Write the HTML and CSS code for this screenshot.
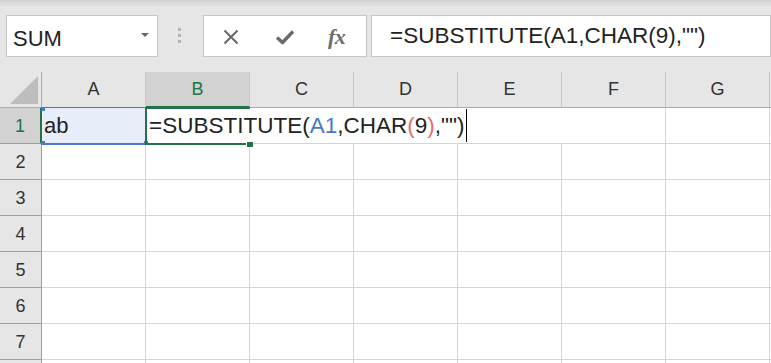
FILE: index.html
```html
<!DOCTYPE html>
<html lang="ja">
<head>
<meta charset="utf-8">
<title>Excel SUBSTITUTE</title>
<link rel="stylesheet" href="styles.css">
</head>
<body>
<div class="toolbar">
  <div class="namebox"><span class="name">SUM</span><span class="caret"></span></div>
  <div class="grip"><i></i><i></i><i></i></div>
  <div class="buttons">
    <svg class="ic-x" width="16" height="16" viewBox="0 0 16 16"><path d="M1.5 1.5 L14.5 14.5 M14.5 1.5 L1.5 14.5" stroke="#666" stroke-width="2" fill="none"/></svg>
    <svg class="ic-check" width="20" height="16" viewBox="0 0 20 16"><path d="M2 8.5 L7.5 13.5 L18 2.5" stroke="#6a6a6a" stroke-width="3.4" fill="none" stroke-linejoin="round"/></svg>
    <span class="fx">fx</span>
  </div>
  <div class="formula">=SUBSTITUTE(A1,CHAR(9),"")</div>
</div>
<div class="sheet">
  <div class="corner"><svg width="41" height="35" viewBox="0 0 41 35"><polygon points="10,32 38,32 38,4" fill="#bdbdbd"/></svg></div>
  <div class="ch">A</div><div class="ch sel">B</div><div class="ch">C</div><div class="ch">D</div><div class="ch">E</div><div class="ch">F</div><div class="ch">G</div><div class="ch"></div>

  <div class="rh sel">1</div>
  <div class="c a1">ab</div>
  <div class="c b1">=SUBSTITUTE(<span class="r1">A1</span>,CHAR<span class="r2">(</span>9<span class="r2">)</span>,"")<span class="cursor"></span></div>
  <div class="c"></div><div class="c"></div><div class="c"></div>

  <div class="rh">2</div><div class="c"></div><div class="c"></div><div class="c"></div><div class="c"></div><div class="c"></div><div class="c"></div><div class="c"></div><div class="c"></div>
  <div class="rh">3</div><div class="c"></div><div class="c"></div><div class="c"></div><div class="c"></div><div class="c"></div><div class="c"></div><div class="c"></div><div class="c"></div>
  <div class="rh">4</div><div class="c"></div><div class="c"></div><div class="c"></div><div class="c"></div><div class="c"></div><div class="c"></div><div class="c"></div><div class="c"></div>
  <div class="rh">5</div><div class="c"></div><div class="c"></div><div class="c"></div><div class="c"></div><div class="c"></div><div class="c"></div><div class="c"></div><div class="c"></div>
  <div class="rh">6</div><div class="c"></div><div class="c"></div><div class="c"></div><div class="c"></div><div class="c"></div><div class="c"></div><div class="c"></div><div class="c"></div>
  <div class="rh">7</div><div class="c"></div><div class="c"></div><div class="c"></div><div class="c"></div><div class="c"></div><div class="c"></div><div class="c"></div><div class="c"></div>
  <div class="rh"></div><div class="c"></div><div class="c"></div><div class="c"></div><div class="c"></div><div class="c"></div><div class="c"></div><div class="c"></div><div class="c"></div>

  <div class="refbox"><i class="h tl"></i><i class="h bl"></i><i class="h br"></i></div>
  <div class="active"></div>
  <div class="handle"></div>
</div>
</body>
</html>
```

FILE: styles.css
```css
html, body {
  margin: 0;
  padding: 0;
}
body {
  width: 771px;
  height: 363px;
  overflow: hidden;
  background: #fff;
  font-family: "Liberation Sans", Arial, sans-serif;
  color: #222;
}

/* ---------- toolbar ---------- */
.toolbar {
  height: 72px;
  box-sizing: border-box;
  padding-top: 15px;
  display: flex;
  align-items: flex-start;
  background: linear-gradient(#cfcfcf 0px, #e6e6e6 7px, #e6e6e6 100%);
}
.namebox {
  margin-left: 6px;
  width: 152px;
  height: 42px;
  box-sizing: border-box;
  border: 1px solid #c6c6c6;
  background: #fff;
  display: flex;
  align-items: flex-start;
  justify-content: space-between;
  padding: 0 8px 0 6px;
}
.name {
  font-size: 22px;
  line-height: 40px;
  padding-top: 3px;
  color: #222;
}
.caret {
  margin-top: 17px;
  width: 0;
  height: 0;
  border-left: 4px solid transparent;
  border-right: 4px solid transparent;
  border-top: 4px solid #666;
}
.grip {
  margin-left: 20px;
  margin-top: 13px;
  display: flex;
  flex-direction: column;
  gap: 3px;
}
.grip i {
  display: block;
  width: 3px;
  height: 3px;
  background: #b4b4b4;
}
.buttons {
  margin-left: 22px;
  width: 164px;
  height: 42px;
  box-sizing: border-box;
  border: 1px solid #c6c6c6;
  background: #fff;
  display: flex;
  align-items: flex-start;
  padding-left: 19px;
}
.ic-x {
  margin-top: 13px;
  display: block;
}
.ic-check {
  margin-top: 13px;
  margin-left: 36px;
  display: block;
}
.fx {
  margin-left: 33px;
  margin-top: 8px;
  font-family: "Liberation Serif", "Times New Roman", serif;
  font-style: italic;
  font-weight: bold;
  font-size: 22px;
  line-height: 26px;
  color: #6e6e6e;
  letter-spacing: -0.5px;
}
.formula {
  margin-left: 4px;
  flex: 1;
  height: 42px;
  box-sizing: border-box;
  border: 1px solid #c6c6c6;
  background: #fff;
  padding-left: 18px;
  font-size: 22.5px;
  line-height: 40px;
  color: #222;
  white-space: nowrap;
}

/* ---------- sheet ---------- */
.sheet {
  position: relative;
  display: grid;
  grid-template-columns: 42px repeat(7, 104px) 1fr;
  grid-auto-rows: 36px;
}
.corner {
  background: #e6e6e6;
  border-right: 1px solid #ababab;
  border-bottom: 1px solid #ababab;
  box-sizing: border-box;
}
.corner svg { display: block; }
.ch {
  box-sizing: border-box;
  background: #e6e6e6;
  border-right: 1px solid #c6c6c6;
  border-bottom: 1px solid #ababab;
  text-align: center;
  font-size: 18px;
  line-height: 35px;
  color: #333;
}
.ch.sel {
  background: #d2d2d2;
  color: #217346;
  border-bottom: 2px solid #217346;
}
.rh {
  box-sizing: border-box;
  background: #e6e6e6;
  border-right: 1px solid #9e9e9e;
  border-bottom: 1px solid #9e9e9e;
  text-align: center;
  font-size: 18px;
  line-height: 35px;
  padding-top: 1px;
  color: #333;
}
.rh.sel {
  background: #d2d2d2;
  color: #217346;
  border-right: 2px solid #217346;
}
.c {
  box-sizing: border-box;
  border-right: 1px solid #d4d4d4;
  border-bottom: 1px solid #d4d4d4;
  font-size: 22px;
  line-height: 36px;
  padding-left: 3px;
  white-space: nowrap;
}
.a1 {
  background: #e7eefa;
  padding-left: 2px;
}
.b1 {
  grid-column: span 4;
  border-right: none;
  position: relative;
  font-size: 22.5px;
}
.r1 { color: #4a78c8; }
.r2 { color: #e07070; }
.cursor {
  display: inline-block;
  width: 1px;
  height: 33px;
  background: #000;
  vertical-align: top;
  margin-top: 1px;
  margin-left: 2px;
}

/* overlays */
.refbox {
  position: absolute;
  left: 41px;
  top: 35px;
  width: 105px;
  height: 38px;
  box-sizing: border-box;
  border-top: 1px solid #4a78c8;
  border-bottom: 2px solid #4a78c8;
}
.refbox .h {
  position: absolute;
  width: 4px;
  height: 4px;
  background: #4a78c8;
}
.refbox .tl { left: 0; top: -1px; }
.refbox .bl { left: 0; bottom: -2px; }
.refbox .br { right: -2px; bottom: -2px; }
.active {
  position: absolute;
  left: 145px;
  top: 35px;
  width: 105px;
  height: 38px;
  box-sizing: border-box;
  border: 2px solid #217346;
  border-right: none;
}
.handle {
  position: absolute;
  left: 246px;
  top: 70px;
  width: 6px;
  height: 5px;
  background: #217346;
  border-left: 1px solid #fff;
}
```
